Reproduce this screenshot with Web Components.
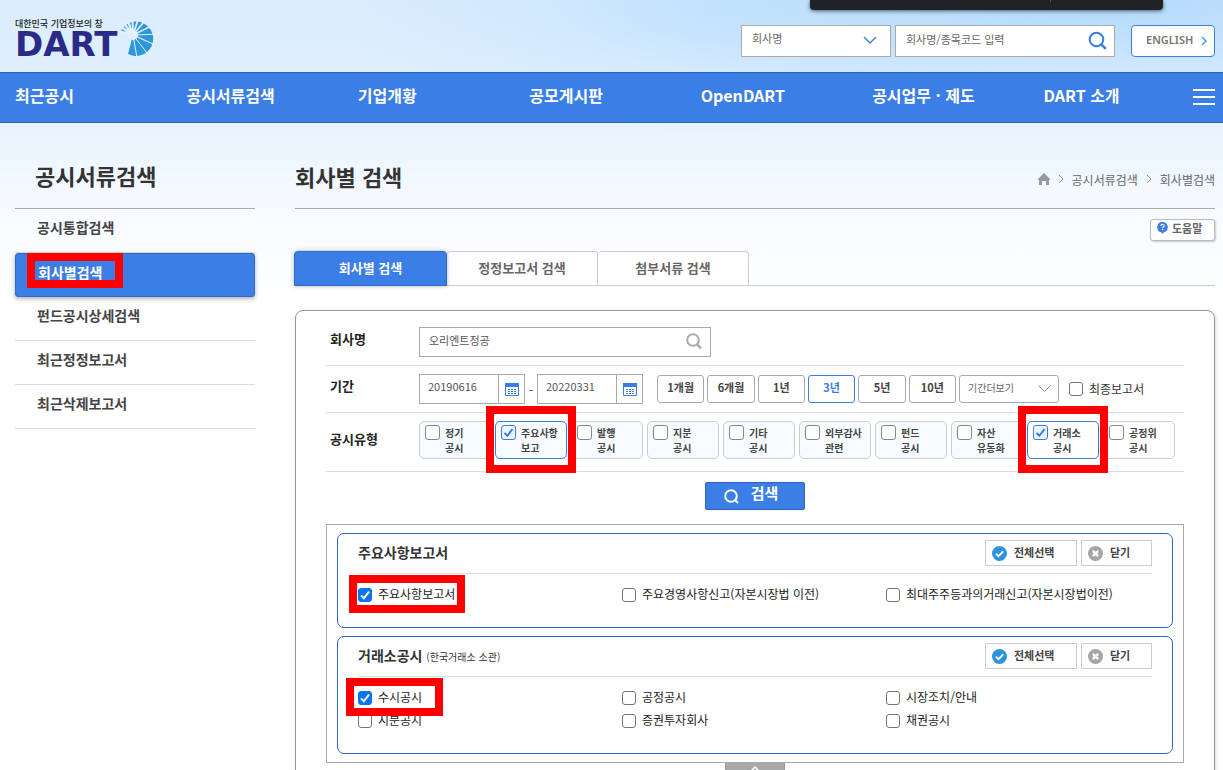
<!DOCTYPE html>
<html lang="ko">
<head>
<meta charset="utf-8">
<meta name="viewport" content="width=device-width, initial-scale=1">
<title>DART 회사별 검색</title>
<style>
  html { scrollbar-width: none; background: #fff; }
  body {
    margin: 0;
    font-family: "Noto Sans CJK KR", "Noto Sans", sans-serif;
    font-size: 12px;
    color: #333;
  }
</style>
</head>
<body>
<dart-page>
  <dart-header slot="header"></dart-header>
  <dart-nav slot="nav"></dart-nav>
  <side-menu slot="side" heading="공시서류검색">
    <side-item>공시통합검색</side-item>
    <side-item current>회사별검색</side-item>
    <side-item>펀드공시상세검색</side-item>
    <side-item>최근정정보고서</side-item>
    <side-item>최근삭제보고서</side-item>
  </side-menu>
  <page-title>회사별 검색</page-title>
  <tab-bar></tab-bar>
  <search-panel></search-panel>
</dart-page>

<script>
const BASE = `
  :host, *, *::before, *::after { box-sizing: border-box; }
  a { color: inherit; text-decoration: none; }
  ul { list-style: none; margin: 0; padding: 0; }
  h1, h2, h3 { margin: 0; }
  button, input, select { font: inherit; color: inherit; margin: 0; padding: 0; border-radius: 0; }
  button { cursor: pointer; }
  svg { display: block; flex: none; }
`;
const MARK = `
  .mark { position: absolute; border: 8px solid #f00; pointer-events: none; z-index: 2; }
`;
const CHECK = stroke => `url("data:image/svg+xml,%3Csvg xmlns='http://www.w3.org/2000/svg' viewBox='0 0 14 14'%3E%3Cpath d='M3 7.4l2.8 2.9L11 3.6' fill='none' stroke='${stroke}' stroke-width='2'/%3E%3C/svg%3E")`;

function define(name, html) {
  customElements.define(name, class extends HTMLElement {
    constructor() {
      super();
      const text = typeof html === 'function' ? html(this) : html;
      this.attachShadow({ mode: 'open' }).innerHTML = text;
    }
  });
}

define('dart-page', `
<style>${BASE}
  :host {
    display: block; position: relative; min-height: 100vh; padding-bottom: 40px;
    background:
      radial-gradient(ellipse 45% 110px at 90% 0, rgba(165,211,252,.75), rgba(165,211,252,0)),
      radial-gradient(ellipse 30% 120px at 58% 10px, rgba(190,225,253,.6), rgba(190,225,253,0)),
      linear-gradient(180deg, #daecfd 0, #dfeffe 70px, #e6f3fe 124px, #f6faff 200px, #fff 310px);
  }
  .columns { display: grid; grid-template-columns: 240px minmax(0, 1fr); gap: 40px; padding: 0 8px 0 15px; }
  .toast {
    position: absolute; top: 0; right: 60px; width: 353px; height: 10px;
    background: #202227; border-radius: 0 0 4px 4px; box-shadow: 0 1px 4px rgba(0,0,0,.6);
  }
  .toast::after { content: ""; position: absolute; left: 240px; top: 0; width: 1px; height: 2px; background: #555; }
</style>
<slot name="header"></slot>
<slot name="nav"></slot>
<div class="columns">
  <slot name="side"></slot>
  <main><slot></slot></main>
</div>
<div class="toast"></div>
`);

/* Sunburst beside the wordmark: wedges cut from a disc by rays that widen towards the hub's upper left. */
const rays = [[-165, 2.6], [-146, 2.6], [-128, 2.4], [-110, 2.2], [-92, 2], [-72, 1.8], [-50, 1.6], [-26, 1.4], [-2, 1.2], [24, 1.1], [52, 1], [80, 1]].map(([d, w]) => {
  const r = d * Math.PI / 180;
  return `<path stroke-width="${w}" d="M14 15L${(14 + 26 * Math.cos(r)).toFixed(1)} ${(15 + 26 * Math.sin(r)).toFixed(1)}"/>`;
}).join('');

define('dart-header', `
<style>${BASE}
  :host { display: flex; height: 72px; padding: 0 8px 0 15px; align-items: flex-start; justify-content: space-between; }
  .logo { display: block; position: relative; padding-top: 18px; color: #2b2a86; }
  .tag { display: block; font: 500 9px/12px "Noto Sans CJK KR", sans-serif; color: #222; }
  .word { display: block; font: 700 34px/28px "DejaVu Sans", sans-serif; }
  .logo svg { position: absolute; left: 104px; top: 20px; }
  form { display: flex; padding-top: 25px; font-size: 11px; color: #666; }
  .box { display: flex; align-items: center; position: relative; height: 32px; background: #fff; border: 1px solid #aaa; }
  .pick { width: 150px; margin-right: 4px; }
  .find { width: 220px; margin-right: 16px; }
  select, input { appearance: none; border: 0; background: none; width: 100%; height: 26px; padding: 0 10px; outline: 0; align-self: flex-start; }
  input::placeholder { color: #666; opacity: 1; }
  .pick select { height: 24px; }
  .pick svg { position: absolute; right: 13px; top: 10px; pointer-events: none; }
  .find button { background: none; border: 0; margin: 0 7px 2px 0; }
  .english {
    display: flex; align-items: center; justify-content: space-between; width: 84px; height: 32px; padding: 0 7px 0 14px;
    border: 1px solid #3b7de4; border-radius: 4px; background: #fff; font-family: "Noto Sans", sans-serif; font-weight: 600; color: #777;
  }
  .english span { padding-bottom: 4px; }
</style>
<a class="logo" href="#">
  <span class="tag">대한민국 기업정보의 창</span>
  <span class="word">DART</span>
  <svg width="35" height="36" viewBox="0 0 35 36">
    <path fill="#2e97dc" d="M1 12.500A17.200 17.200 0 1 1 9 34L14 15z"/>
    <g stroke="#e3f1fe">${rays}</g>
    <circle cx="14" cy="15" r="5" fill="#e3f1fe"/>
  </svg>
</a>
<form>
  <div class="box pick">
    <select aria-label="검색 구분"><option>회사명</option></select>
    <svg width="14" height="9" viewBox="0 0 14 9"><path d="M1 1l6 6 6-6" fill="none" stroke="#2f7be0" stroke-width="1.300"/></svg>
  </div>
  <div class="box find">
    <input type="text" aria-label="회사명 또는 종목코드" placeholder="회사명/종목코드 입력">
    <button type="button" aria-label="검색"><svg width="19" height="19" viewBox="0 0 19 19"><g fill="none" stroke="#3b7de4" stroke-width="2"><circle cx="8.500" cy="8.500" r="6.800"/><path d="M13.300 13.300l4.500 4.500" stroke-width="2.600"/></g></svg></button>
  </div>
  <button type="button" class="english"><span>ENGLISH</span><svg width="6" height="10" viewBox="0 0 6 10"><path d="M1 1l4 4-4 4" fill="none" stroke="#2d9fd8" stroke-width="1.400"/></svg></button>
</form>
`);

define('dart-nav', `
<style>${BASE}
  :host { display: block; background: #3a7ee6; border: solid #2d65ba; border-width: 1px 0; padding: 0 8px 0 15px; }
  ul { display: grid; grid-template-columns: repeat(7, minmax(0, 1fr)); }
  li { display: flex; justify-content: space-between; align-items: center; height: 49px; padding-bottom: 4px; }
  a { font-size: 16px; line-height: 24px; padding-bottom: 2px; font-weight: 700; color: #fff; white-space: nowrap; }
  button { border: 0; background: none; width: 22px; height: 16px; margin-top: 2px; }
</style>
<nav><ul>
  <li><a href="#">최근공시</a></li>
  <li><a href="#">공시서류검색</a></li>
  <li><a href="#">기업개황</a></li>
  <li><a href="#">공모게시판</a></li>
  <li><a href="#">OpenDART</a></li>
  <li><a href="#">공시업무 · 제도</a></li>
  <li><a href="#">DART 소개</a>
    <button type="button" aria-label="전체 메뉴"><svg width="22" height="16" viewBox="0 0 22 16"><path d="M0 1h22M0 8h22M0 15h22" stroke="#fff" stroke-width="2"/></svg></button></li>
</ul></nav>
`);

define('side-menu', el => `
<style>${BASE}
  :host { display: block; }
  h2 { height: 86px; padding: 0 20px; font-size: 22px; line-height: 104px; font-weight: 700; border-bottom: 1px solid #aaa; }
</style>
<h2>${el.getAttribute('heading')}</h2>
<nav><slot></slot></nav>
`);

define('side-item', el => `
<style>${BASE}${MARK}
  :host { display: block; position: relative; height: 44px; border-bottom: 1px solid #ddd; font-size: 14px; font-weight: 700; color: #444; }
  :host([current]) { border: 1px solid #2f6bcb; border-radius: 3px; background: #3a7ee6; color: #fff; box-shadow: 0 2px 4px rgba(0,0,0,.3); }
  a { display: block; padding: 0 22px; line-height: 36px; }
  .mark { left: 11px; top: -1px; width: 96px; height: 35px; }
</style>
<a href="#"><slot></slot></a>${el.hasAttribute('current') ? '<span class="mark"></span>' : ''}
`);

define('page-title', `
<style>${BASE}
  :host { display: flex; justify-content: space-between; height: 86px; border-bottom: 1px solid #aaa; }
  h1 { font-size: 22px; line-height: 106px; font-weight: 700; }
  nav { display: flex; align-items: center; gap: 8px; height: 112px; color: #666; }
</style>
<h1><slot></slot></h1>
<nav aria-label="현재 위치">
  <svg width="12" height="12" viewBox="0 0 12 12"><path d="M6 0l6 6v1h-1v5H8V8H4v4H1V7H0V6z" fill="#999"/></svg>
  <svg width="6" height="10" viewBox="0 0 6 10"><path d="M1 1l4 4-4 4" fill="none" stroke="#999"/></svg>
  <a href="#">공시서류검색</a>
  <svg width="6" height="10" viewBox="0 0 6 10"><path d="M1 1l4 4-4 4" fill="none" stroke="#999"/></svg>
  <a href="#">회사별검색</a>
</nav>
`);

define('tab-bar', `
<style>${BASE}
  :host { display: block; padding-top: 10px; }
  .help {
    display: flex; gap: 4px; margin: 0 0 10px auto; width: 65px; height: 22px; padding: 2px 6px;
    border: 1px solid #bbb; border-radius: 3px; background: #fff; box-shadow: 1px 1px 2px rgba(0,0,0,.2);
    font-size: 11px; line-height: 12px; font-weight: 700; color: #666;
  }
  .tabs { display: flex; border-bottom: 1px solid #ccc; }
  .tabs button {
    width: 151px; height: 35px; margin-bottom: -1px; padding-bottom: 2px; background: #fff; border: solid #ccc; border-width: 1px 1px 1px 0;
    border-radius: 4px 4px 0 0; font-size: 13px; font-weight: 700; color: #666;
  }
  .tabs .on { width: 153px; margin-left: -1px; background: #3a7ee6; border: 1px solid #2f6bcb; color: #fff; box-shadow: 0 0 4px rgba(0,0,0,.3); z-index: 1; }
</style>
<button type="button" class="help"><svg width="11" height="12" viewBox="0 0 11 12"><path d="M5.500 0a5.200 5.200 0 0 1 1.500 10.200L5 12l-.6-1.700A5.200 5.200 0 0 1 5.500 0z" fill="#3a7ee6"/><path d="M3.800 4c.1-2.200 3.600-2 3.400 0-.1 1-1.600 1-1.600 2.200M5.600 7v1.200" fill="none" stroke="#fff" stroke-width="1.100"/></svg><span>도움말</span></button>
<div class="tabs" role="tablist">
  <button type="button" role="tab" aria-selected="true" class="on">회사별 검색</button>
  <button type="button" role="tab">정정보고서 검색</button>
  <button type="button" role="tab">첨부서류 검색</button>
</div>
`);

define('check-item', el => `
<style>${BASE}${MARK}
  :host { display: block; position: relative; }
  label { display: flex; align-items: center; gap: 6px; height: 23px; line-height: 21px; white-space: nowrap; }
  input { appearance: none; flex: none; width: 14px; height: 14px; border: 1px solid #767676; border-radius: 3px; background: #fff; }
  input:checked { border-color: #0b74f5; background: #0b74f5 ${CHECK('white')} center / 14px; }
  .text { padding-bottom: 2px; }
  .mark { left: -9px; top: -8px; width: 116px; height: 38px; }
  :host([mark="short"]) .mark { left: -12px; width: 97px; }
</style>
<label><input type="checkbox" ${el.hasAttribute('checked') ? 'checked' : ''}><span class="text"><slot></slot></span></label>
${el.hasAttribute('mark') ? '<span class="mark"></span>' : ''}
`);

define('type-chip', el => `
<style>${BASE}${MARK}
  :host { display: block; position: relative; }
  label {
    display: flex; gap: 5px; width: 72px; height: 38px; padding: 3px 0 0 5px; border: 1px solid #ccc; border-radius: 5px;
    background: #f6fbff; font-size: 10px; line-height: 15px; font-weight: 700; color: #444; white-space: nowrap;
  }
  :host([plain]) label { background: #fff; }
  :host([checked]) label { border-color: #3b7de4; }
  input { appearance: none; flex: none; width: 15px; height: 15px; border: 1px solid #888; border-radius: 3px; background: #fff; }
  input:checked { border-color: #3b7de4; background: #edf5ff ${CHECK('%233b7de4')} center / 14px; }
  .mark { left: -9px; top: -15px; width: 90px; height: 67px; }
</style>
<label><input type="checkbox" ${el.hasAttribute('checked') ? 'checked' : ''}><span><slot></slot></span></label>
${el.hasAttribute('checked') ? '<span class="mark"></span>' : ''}
`);

define('field-row', el => `
<style>${BASE}
  :host { display: flex; align-items: flex-start; padding: 8px 0; border-bottom: 1px solid #ddd; }
  .name { flex: none; width: 93px; padding-left: 4px; font-size: 13px; line-height: var(--label-line, 24px); font-weight: 700; color: #222; }
  .body { flex: 1; min-width: 0; display: flex; align-items: center; }
</style>
<span class="name">${el.getAttribute('label')}</span>
<div class="body"><slot></slot></div>
`);

define('date-box', el => `
<style>${BASE}
  :host { display: flex; width: 106px; height: 30px; border: 1px solid #aaa; background: #fff; }
  input { width: 78px; border: 0; outline: 0; background: none; padding: 0 0 6px 8px; font-size: 11px; color: #555; }
  button { flex: 1; display: flex; align-items: center; justify-content: center; border: 0; border-left: 1px solid #aaa; background: none; }
</style>
<input type="text" aria-label="${el.getAttribute('label')}" value="${el.getAttribute('value')}">
<button type="button" aria-label="달력"><svg width="14" height="13" viewBox="0 0 14 13"><path d="M.5.5h13v12H.5z" fill="#fff" stroke="#3b7de4"/><path d="M0 0h14v4H0z" fill="#3b7de4"/><path d="M3 6.500h9M3 8.500h9M3 10.500h9" stroke="#3b7de4" stroke-dasharray="2 1"/></svg></button>
`);

define('group-card', el => `
<style>${BASE}
  :host { display: block; border: 1px solid #3062c8; border-radius: 7px; background: #fff; padding: 0 20px 21px; }
  header { display: flex; align-items: flex-start; height: 40px; padding-top: 6px; border-bottom: 1px solid #ddd; gap: 4px; }
  h3 { font-size: 14px; line-height: 24px; font-weight: 700; margin-right: auto; color: #333; }
  small { font-size: 10px; font-weight: 400; }
  button { display: flex; align-items: center; gap: 7px; height: 26px; padding: 0 6px; border: 1px solid #ccc; background: #fff; font-size: 11px; font-weight: 700; color: #444; }
  button span { padding-bottom: 2px; }
  .all { width: 92px; }
  .close { width: 71px; }
  .list { display: grid; grid-template-columns: 264px 264px minmax(0, 1fr); padding-top: 9px; color: #222; }
</style>
<header>
  <h3>${el.getAttribute('heading')}${el.hasAttribute('note') ? ` <small>${el.getAttribute('note')}</small>` : ''}</h3>
  <button type="button" class="all"><svg width="15" height="15" viewBox="0 0 15 15"><circle cx="7.500" cy="7.500" r="7.500" fill="#2e93df"/><path d="M3.800 7.600l2.700 2.600 4.700-4.800" fill="none" stroke="#fff" stroke-width="2"/></svg><span>전체선택</span></button>
  <button type="button" class="close"><svg width="15" height="15" viewBox="0 0 15 15"><circle cx="7.500" cy="7.500" r="7.500" fill="#a5a5a5"/><path d="M4.800 4.800l5.400 5.400M10.200 4.800l-5.400 5.400" stroke="#fff" stroke-width="2.400"/></svg><span>닫기</span></button>
</header>
<div class="list"><slot></slot></div>
`);

define('search-panel', `
<style>${BASE}
  :host { display: block; margin-top: 24px; padding: 0 30px 40px; border: 1px solid #999; border-radius: 8px; background: #fff; box-shadow: 1px 1px 4px rgba(0,0,0,.15); }
  .first { padding-top: 16px; }
  .company { display: flex; align-items: center; width: 292px; height: 30px; border: 1px solid #aaa; }
  .company input { flex: 1; min-width: 0; height: 28px; padding: 0 9px 4px; border: 0; outline: 0; background: none; font-size: 11px; color: #555; }
  .company button { border: 0; background: none; margin: 0 8px 2px 0; }
  .dash { width: 12px; text-align: center; }
  .terms { display: grid; grid-template-columns: repeat(6, minmax(0, 1fr)); gap: 3px; width: 299px; margin: 0 3px 0 14px; }
  .terms button, .more { height: 28px; border: 1px solid #aaa; border-radius: 3px; background: #fff; }
  .terms button { padding-bottom: 4px; font-size: 11px; font-weight: 700; color: #444; }
  .terms .on { border-color: #3b7de4; color: #3b7de4; }
  .more { position: relative; width: 100px; margin-right: 10px; }
  .more select { appearance: none; width: 100%; height: 22px; padding: 0 8px; border: 0; outline: 0; background: none; font-size: 10px; color: #666; display: block; }
  .more svg { position: absolute; right: 7px; top: 9px; pointer-events: none; }
  .types { padding-bottom: 12px; --label-line: 36px; }
  .chips { display: flex; gap: 4px; }
  .go {
    display: flex; align-items: center; justify-content: center; gap: 12px; width: 100px; height: 28px; margin: 10px auto 14px; padding-right: 8px;
    background: #3a7ee6; border: 1px solid #2d65ba; border-radius: 2px; color: #fff; font-size: 15px; font-weight: 700;
  }
  .go span { padding-bottom: 6px; line-height: 18px; }
  .groups { display: grid; gap: 8px; padding: 8px 10px; border: 1px solid #aaa; }
  .fold { display: block; width: 60px; height: 22px; margin: 0 auto; padding: 0 23px 10px; border: 1px solid #999; border-top: 0; background: #a9a9a9; }
</style>
<form>
  <field-row class="first" label="회사명">
    <div class="company"><input type="text" aria-label="회사명" value="오리엔트정공">
      <button type="button" aria-label="회사 찾기"><svg width="16" height="17" viewBox="0 0 16 17"><g fill="none" stroke="#aaa" stroke-width="2"><circle cx="7" cy="7" r="5.800"/><path d="M11 11.400l4 4" stroke-width="2.400"/></g></svg></button></div>
  </field-row>
  <field-row label="기간">
    <date-box label="시작일" value="20190616"></date-box>
    <span class="dash">-</span>
    <date-box label="종료일" value="20220331"></date-box>
    <div class="terms">
      <button type="button">1개월</button><button type="button">6개월</button><button type="button">1년</button>
      <button type="button" class="on">3년</button><button type="button">5년</button><button type="button">10년</button>
    </div>
    <div class="more"><select aria-label="기간 더보기"><option>기간더보기</option></select>
      <svg width="13" height="8" viewBox="0 0 13 8"><path d="M.5.5l6 6 6-6" fill="none" stroke="#888"/></svg></div>
    <check-item>최종보고서</check-item>
  </field-row>
  <field-row class="types" label="공시유형">
    <div class="chips">
      <type-chip>정기<br>공시</type-chip>
      <type-chip checked>주요사항<br>보고</type-chip>
      <type-chip>발행<br>공시</type-chip>
      <type-chip>지분<br>공시</type-chip>
      <type-chip>기타<br>공시</type-chip>
      <type-chip>외부감사<br>관련</type-chip>
      <type-chip>펀드<br>공시</type-chip>
      <type-chip>자산<br>유동화</type-chip>
      <type-chip checked plain>거래소<br>공시</type-chip>
      <type-chip plain>공정위<br>공시</type-chip>
    </div>
  </field-row>
  <button type="button" class="go"><svg width="15" height="15" viewBox="0 0 15 15"><g fill="none" stroke="#fff" stroke-width="2"><circle cx="7" cy="7" r="5.800"/><path d="M10.500 10.500l3.500 3.500"/></g></svg><span>검색</span></button>
  <div class="groups">
    <group-card heading="주요사항보고서">
      <check-item checked mark>주요사항보고서</check-item>
      <check-item>주요경영사항신고(자본시장법 이전)</check-item>
      <check-item>최대주주등과의거래신고(자본시장법이전)</check-item>
    </group-card>
    <group-card heading="거래소공시" note="(한국거래소 소관)">
      <check-item checked mark="short">수시공시</check-item>
      <check-item>공정공시</check-item>
      <check-item>시장조치/안내</check-item>
      <check-item>지분공시</check-item>
      <check-item>증권투자회사</check-item>
      <check-item>채권공시</check-item>
    </group-card>
  </div>
  <button type="button" class="fold" aria-label="접기"><svg width="12" height="8" viewBox="0 0 12 8"><path d="M1 7l5-5 5 5" fill="none" stroke="#fff" stroke-width="1.500"/></svg></button>
</form>
`);
</script>
</body>
</html>
